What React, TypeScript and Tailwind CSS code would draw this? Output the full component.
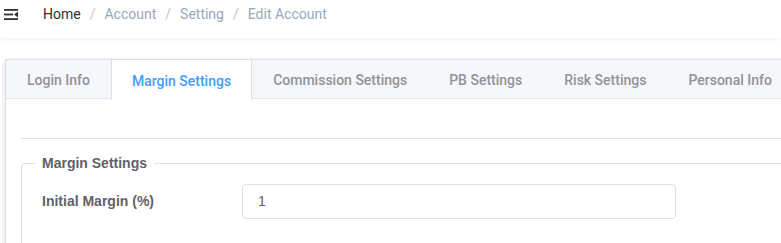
import React from "react";

const TABS = [
  "Login Info",
  "Margin Settings",
  "Commission Settings",
  "PB Settings",
  "Risk Settings",
  "Personal Info",
];

function FoldIcon() {
  return (
    <svg width="14" height="11" viewBox="0 0 14 11" fill="#303133">
      <rect x="0" y="0" width="14" height="1.8" />
      <rect x="0" y="4.6" width="9" height="1.8" />
      <polygon points="14,2.6 14,8.4 10,5.5" />
      <rect x="0" y="9.2" width="14" height="1.8" />
    </svg>
  );
}

export default function App() {
  const active = 1;
  return (
    <div
      className="w-[781px] h-[243px] overflow-hidden bg-white text-[14px]"
      style={{ fontFamily: 'Roboto, "Liberation Sans", Arial, sans-serif' }}
    >
      {/* navbar */}
      <div className="h-[38px] pb-[10px] flex items-center bg-white shadow-[0_1px_4px_rgba(0,21,41,0.08)] relative z-10">
        <div className="pl-[4px] pr-[25px] flex items-center">
          <FoldIcon />
        </div>
        <div className="flex items-center">
          <span className="text-[#303133]">Home</span>
          <span className="mx-[9px] text-[#c0c4cc]">/</span>
          <span className="text-[#97a8be]">Account</span>
          <span className="mx-[9px] text-[#c0c4cc]">/</span>
          <span className="text-[#97a8be]">Setting</span>
          <span className="mx-[9px] text-[#c0c4cc]">/</span>
          <span className="text-[#97a8be]">Edit Account</span>
        </div>
      </div>

      {/* page */}
      <div className="pl-[5px] pt-[21px]">
        <div className="w-[820px] border border-[#dcdfe6] bg-white shadow-[0_2px_4px_0_rgba(0,0,0,0.12),0_0_6px_0_rgba(0,0,0,0.04)]">
          <div className="flex h-[39px] bg-[#f5f7fa] border-b border-[#e4e7ed]">
            {TABS.map((t, i) => (
              <div
                key={t}
                className={
                  i === active
                    ? "h-[40px] pt-[2px] px-[20px] flex items-center font-medium text-[#409eff] bg-white border-x border-[#dcdfe6]"
                    : "h-[39px] pt-[2px] px-[20px] flex items-center font-medium text-[#909399] border-x border-transparent"
                }
              >
                {t}
              </div>
            ))}
          </div>

          <div className="p-[15px]">
            <div className="h-[25px] border-b border-[#dcdfe6]" />
            <fieldset className="mt-[14px] border border-[#dcdfe6] rounded-[4px] px-[20px] pb-[20px] min-h-[120px] font-['Liberation_Sans',Arial,sans-serif]">
              <legend className="ml-[-7px] px-[7px] font-bold text-[#606266]">
                Margin Settings
              </legend>
              <div className="flex items-center mt-[10px]">
                <label className="w-[200px] font-bold text-[#606266]">
                  Initial Margin (%)
                </label>
                <div className="w-[434px] h-[35px] border border-[#dcdfe6] rounded-[4px] flex items-center px-[15px] text-[#606266]">
                  1
                </div>
              </div>
            </fieldset>
          </div>
        </div>
      </div>
    </div>
  );
}
